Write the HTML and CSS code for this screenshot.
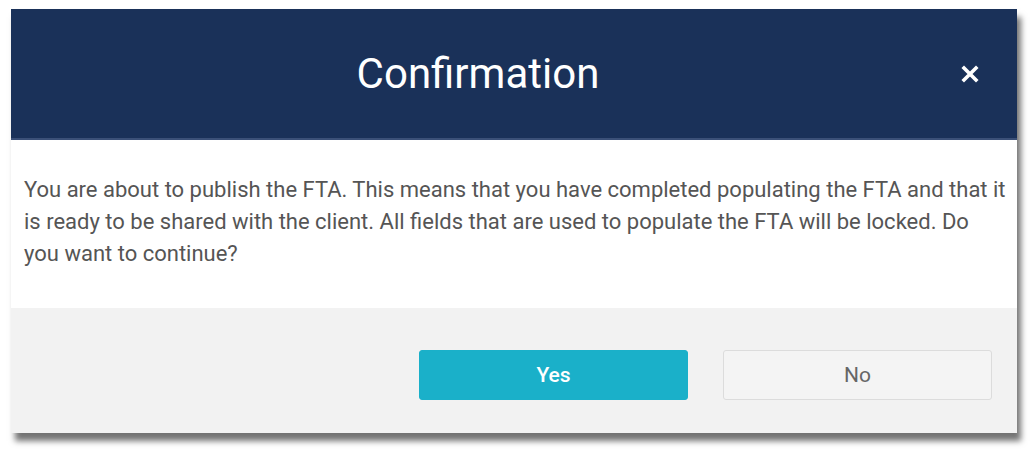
FILE: index.html
```html
<!DOCTYPE html>
<html>
<head>
<meta charset="utf-8">
<link rel="stylesheet" href="styles.css">
</head>
<body>
<div class="dialog">
  <div class="header">
    <h1 class="title">Confirmation</h1>
    <button class="close" aria-label="Close">
      <svg width="18" height="18" viewBox="0 0 18 18"><path d="M3 3 L15 15 M15 3 L3 15" stroke="#fff" stroke-width="3.6" stroke-linecap="square"/></svg>
    </button>
  </div>
  <div class="content">
    <p class="message">You are about to publish the FTA. This means that you have completed populating the FTA and that it is ready to be shared with the client. All fields that are used to populate the FTA will be locked. Do you want to continue?</p>
  </div>
  <div class="footer">
    <button class="btn btn-yes">Yes</button>
    <button class="btn btn-no">No</button>
  </div>
</div>
</body>
</html>
```
FILE: styles.css
```css
html, body {
  margin: 0;
  padding: 0;
  background: #ffffff;
}
body {
  padding: 9px 0 16px 11px;
  font-family: Roboto, "Liberation Sans", sans-serif;
}
.dialog {
  width: 1006px;
  box-shadow: 4px 8px 6px rgba(0, 0, 0, 0.55);
  background: #fff;
}
.header {
  height: 129px;
  background: #1a3159;
  border-bottom: 2px solid #3b5078;
  display: flex;
  align-items: center;
}
.title {
  flex: 1;
  margin: 0;
  text-align: center;
  color: #fff;
  font-size: 42px;
  font-weight: 400;
  letter-spacing: 0;
}
.close {
  width: 72px;
  height: 40px;
  background: none;
  border: none;
  padding: 0 0 0 16px;
  display: flex;
  align-items: center;
  cursor: pointer;
}
.content {
  background: #fff;
  height: 168px;
  box-sizing: border-box;
  padding: 34px 10px 0 13px;
}
.message {
  margin: 0;
  font-size: 22px;
  line-height: 32px;
  color: #555;
}
.footer {
  background: #f2f2f2;
  height: 125px;
  box-sizing: border-box;
  padding: 42px 25px 0 0;
  display: flex;
  justify-content: flex-end;
  gap: 35px;
}
.btn {
  width: 269px;
  height: 50px;
  border-radius: 3px;
  font-family: Roboto, "Liberation Sans", sans-serif;
  font-size: 21px;
  cursor: pointer;
}
.btn-yes {
  background: #1ab0c9;
  border: 1px solid #1ab0c9;
  color: #fff;
  font-weight: 500;
}
.btn-no {
  background: #f4f4f4;
  border: 1px solid #dcdcdc;
  color: #666;
}
```
